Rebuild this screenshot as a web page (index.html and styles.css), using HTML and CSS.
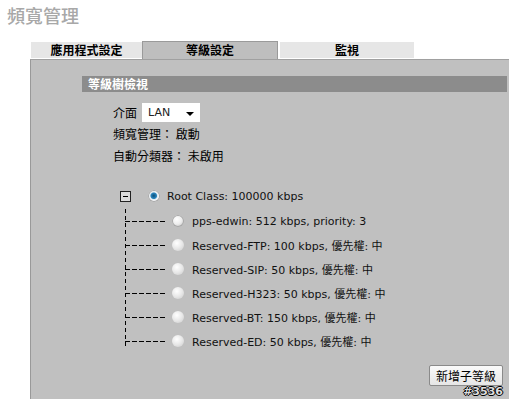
FILE: index.html
```html
<!DOCTYPE html>
<html lang="zh-Hant">
<head>
    <meta charset="UTF-8">
    <title>頻寬管理</title>
    <link rel="stylesheet" href="styles.css">
</head>
<body>
    <h1 class="page-title">頻寬管理</h1>

    <div class="tabs">
        <div class="tab">應用程式設定</div>
        <div class="tab tab-active">等級設定</div>
        <div class="tab">監視</div>
    </div>

    <div class="panel">
        <div class="section-head">等級樹檢視</div>

        <div class="form-row">
            <span>介面</span>
            <div class="select-box">LAN <span class="caret"></span></div>
        </div>
        <div class="form-row">頻寬管理： 啟動</div>
        <div class="form-row">自動分類器： 未啟用</div>

        <div class="tree">
            <div class="tree-root">
                <span class="toggle"></span>
                <span class="radio radio-checked"></span>
                <span class="tree-label">Root Class: 100000 kbps</span>
            </div>
            <div class="tree-children">
                <div class="tree-item">
                    <span class="dash"></span>
                    <span class="radio"></span>
                    <span class="tree-label">pps-edwin: 512 kbps, priority: 3</span>
                </div>
                <div class="tree-item">
                    <span class="dash"></span>
                    <span class="radio radio-off"></span>
                    <span class="tree-label">Reserved-FTP: 100 kbps, 優先權: 中</span>
                </div>
                <div class="tree-item">
                    <span class="dash"></span>
                    <span class="radio radio-off"></span>
                    <span class="tree-label">Reserved-SIP: 50 kbps, 優先權: 中</span>
                </div>
                <div class="tree-item">
                    <span class="dash"></span>
                    <span class="radio radio-off"></span>
                    <span class="tree-label">Reserved-H323: 50 kbps, 優先權: 中</span>
                </div>
                <div class="tree-item">
                    <span class="dash"></span>
                    <span class="radio radio-off"></span>
                    <span class="tree-label">Reserved-BT: 150 kbps, 優先權: 中</span>
                </div>
                <div class="tree-item">
                    <span class="dash"></span>
                    <span class="radio radio-off"></span>
                    <span class="tree-label">Reserved-ED: 50 kbps, 優先權: 中</span>
                </div>
            </div>
        </div>

        <div class="actions">
            <button class="add-button">新增子等級</button>
            <span class="build-no">#3536</span>
        </div>
    </div>
</body>
</html>
```

FILE: styles.css
```css
body {
    margin: 0;
    background: #fff;
    font-family: "Noto Sans CJK TC", "Noto Sans", sans-serif;
    font-size: 12px;
    color: #000;
    overflow: hidden;
}
.page-title {
    margin: 0;
    padding: 4px 0 0 7px;
    height: 37px;
    box-sizing: border-box;
    font-size: 18px;
    font-weight: 500;
    line-height: 22px;
    color: #a8a8a8;
}
.tabs {
    display: flex;
    align-items: flex-end;
    padding-left: 31px;
    height: 22px;
}
.tab {
    width: 111px;
    height: 16px;
    margin-bottom: 1px;
    background: #e6e6e6;
    font-size: 12px;
    font-weight: bold;
    line-height: 16px;
    text-align: center;
}
.tab-active {
    width: 134px;
    height: 17px;
    margin-bottom: 0;
    background: #bebebe;
    border: 1px solid #9a9a9a;
    border-bottom: none;
}
.tab:last-child {
    width: 134px;
    margin-left: 2px;
}
.panel {
    margin-left: 30px;
    height: 340px;
    background: #c0c0c0;
    border-left: 1px solid #999;
    border-top: 1px solid #a0a0a0;
    padding: 16px 2px 0 51px;
}
.section-head {
    height: 16px;
    padding-left: 6px;
    background: #8c8c8c;
    color: #fff;
    font-weight: bold;
    line-height: 16px;
}
.form-row {
    display: flex;
    align-items: center;
    gap: 5px;
    height: 22px;
    padding-left: 31px;
}
.form-row:nth-child(2) {
    margin-top: 10px;
    height: 20px;
}
.select-box {
    position: relative;
    width: 52px;
    height: 19px;
    padding-left: 6px;
    background: #fff;
    font-family: "DejaVu Sans", sans-serif;
    font-size: 11px;
    line-height: 19px;
    color: #222;
}
.caret {
    position: absolute;
    right: 6px;
    top: 9px;
    border-left: 4px solid transparent;
    border-right: 4px solid transparent;
    border-top: 4px solid #000;
}
.tree {
    margin-top: 23px;
    padding-left: 38px;
    font-family: "DejaVu Sans", "Noto Sans CJK TC", sans-serif;
    font-size: 11px;
    color: #111;
}
.tree-root {
    display: flex;
    align-items: center;
    height: 14px;
}
.toggle {
    position: relative;
    width: 9px;
    height: 9px;
    border: 1px solid #222;
    background: #ddd;
}
.toggle::after {
    content: "";
    position: absolute;
    left: 2px;
    top: 4px;
    width: 5px;
    height: 1px;
    background: #000;
}
.tree-root .radio {
    margin: 0 7px 0 17px;
}
.radio {
    width: 12px;
    height: 12px;
    border-radius: 50%;
    background: radial-gradient(circle at 40% 35%, #fff 0%, #eee 45%, #b5b5b5 100%);
    box-shadow: inset 0 0 0 1px #a8a8a8;
}
.radio-checked {
    background: radial-gradient(circle at 48% 48%, #0d4f78 0%, #2a86bf 32%, #dfe8ee 42%, #fff 58%, #a5a5a5 100%);
}
.radio-off {
    background: radial-gradient(circle at 40% 35%, #fff 0%, #e8e8e8 50%, #cacaca 100%);
    box-shadow: none;
}
.tree-children {
    margin-left: 5px;
    margin-top: 2px;
    height: 140px;
    background: repeating-linear-gradient(to bottom, #000 0 4px, transparent 4px 7px) left top / 1px 100% no-repeat;
}
.tree-item {
    display: flex;
    align-items: center;
    height: 24px;
}
.tree-item:first-child {
    margin-top: 6px;
}
.dash {
    width: 40px;
    height: 1px;
    margin-right: 7px;
    background: repeating-linear-gradient(to right, #000 0 5px, transparent 5px 7px);
}
.tree-item .radio {
    margin-right: 8px;
}
.actions {
    display: flex;
    flex-direction: column;
    align-items: flex-end;
    margin-top: 16px;
    padding-right: 4px;
}
.add-button {
    width: 74px;
    height: 21px;
    padding: 0;
    background: linear-gradient(#fafafa, #e6e6e6);
    border: 1px solid #8a8a8a;
    border-radius: 2px;
    font-family: "Noto Sans CJK TC", sans-serif;
    font-size: 12px;
    color: #000;
}
.build-no {
    font-family: "DejaVu Sans", sans-serif;
    font-size: 11px;
    font-weight: bold;
    line-height: 12px;
    color: #ddd;
    text-shadow: 1px 0 #000, -1px 0 #000, 0 1px #000, 0 -1px #000;
}
```
